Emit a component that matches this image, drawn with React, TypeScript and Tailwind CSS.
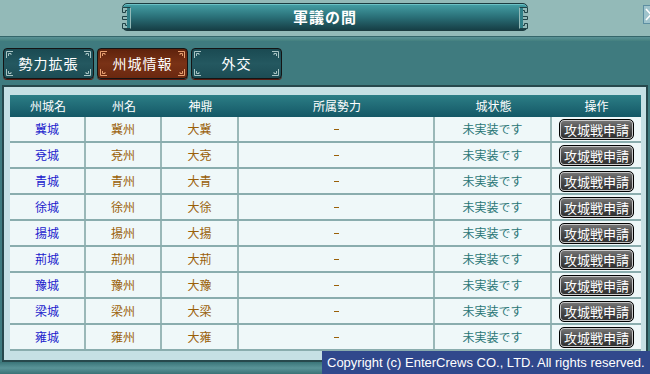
import React from "react";

const JP = '"Noto Sans CJK JP", "Noto Sans", sans-serif';

const rows: [string, string, string][] = [
  ["冀城", "冀州", "大冀"],
  ["兗城", "兗州", "大兗"],
  ["青城", "青州", "大青"],
  ["徐城", "徐州", "大徐"],
  ["揚城", "揚州", "大揚"],
  ["荊城", "荊州", "大荊"],
  ["豫城", "豫州", "大豫"],
  ["梁城", "梁州", "大梁"],
  ["雍城", "雍州", "大雍"],
];

function Corner({ color, className }: { color: string; className: string }) {
  return (
    <svg width="7" height="7" viewBox="0 0 7 7" className={`absolute ${className}`}>
      <path d="M0.5 7 V0.5 H7 M2.5 5 V2.5 H5 V4" fill="none" stroke={color} strokeWidth="1" />
    </svg>
  );
}

function Tab({ label, active }: { label: string; active?: boolean }) {
  const c = active ? "#e8a070" : "#a8c4c4";
  return (
    <div
      className={`relative w-[91px] h-[31px] rounded-[4px] border border-[#141414] flex items-center justify-center text-white text-[14px] shadow-[0_1px_0_#5a1c12] ${
        active
          ? "bg-gradient-to-b from-[#5e220c] via-[#7a3216] to-[#6a2810]"
          : "bg-gradient-to-b from-[#1a4a52] via-[#245860] to-[#1c4c54]"
      }`}
    >
      <Corner color={c} className="left-[2px] top-[2px]" />
      <Corner color={c} className="right-[2px] top-[2px] -scale-x-100" />
      <Corner color={c} className="left-[2px] bottom-[2px] -scale-y-100" />
      <Corner color={c} className="right-[2px] bottom-[2px] -scale-100" />
      <span className="tracking-[1px]">{label}</span>
    </div>
  );
}

function KeyOrnament({ flip }: { flip?: boolean }) {
  return (
    <svg
      width="10"
      height="22"
      viewBox="0 0 10 22"
      className={`absolute top-[3px] ${flip ? "right-[-2px] -scale-x-100" : "left-[-2px]"}`}
    >
      <rect x="0" y="0" width="10" height="22" fill="#93bab8" />
      <path
        d="M9.5 0.5 H1.5 V5.5 H4.5 V3.5 H6.5 V9.5 H1.5 V12.5 H6.5 V18.5 H4.5 V16.5 H1.5 V21.5 H9.5"
        fill="none"
        stroke="#1f4347"
        strokeWidth="1"
      />
      <path d="M7.5 1 V21" stroke="#2f8088" strokeWidth="3" />
    </svg>
  );
}

export default function App() {
  return (
    <div
      className="relative w-[650px] h-[374px] overflow-hidden bg-[#3f7b7f] flex flex-col"
      style={{ fontFamily: JP }}
    >
      {/* top bar */}
      <div className="relative h-[36px] bg-[#93bab8] flex justify-center pt-[3px] shrink-0">
        <div className="relative w-[406px] h-[28px] rounded-[5px] border border-[#1c3c40] bg-gradient-to-b from-[#45a0a6] via-[#2a7078] to-[#163f46] flex items-center justify-center shadow-[inset_0_1px_0_#6cc0c4]">
          <KeyOrnament />
          <KeyOrnament flip />
          <span className="text-white font-bold text-[15px] tracking-[1px]">軍議の間</span>
        </div>
        <div className="absolute left-[643px] top-[5px] w-[16px] h-[19px] border border-[#5d8fa2] bg-[#9fc4cc]">
          <svg width="14" height="17" viewBox="0 0 14 17" className="block">
            <path d="M2 3 L12 14 M12 3 L2 14" stroke="#ffffff" strokeWidth="1.6" />
          </svg>
        </div>
      </div>
      <div className="h-[1px] bg-[#34666a] shrink-0" />
      <div className="h-[4px] bg-gradient-to-b from-[#5a9296] to-[#44807f] shrink-0" />

      {/* tabs */}
      <div className="flex gap-[3px] pl-[3px] pt-[7px] shrink-0">
        <Tab label="勢力拡張" />
        <Tab label="州城情報" active />
        <Tab label="外交" />
      </div>

      {/* panel */}
      <div className="mt-[6px] ml-[2px] w-[646px] h-[277px] border-2 border-[#27484c] bg-[#c6e0e4] pt-[8px] pl-[6px] shrink-0">
        <div className="w-[631px] text-[12px]">
          <div className="grid grid-cols-[76px_76px_77px_196px_117px_89px] h-[22px] bg-gradient-to-b from-[#2c7e86] to-[#145866] text-white">
            {["州城名", "州名", "神鼎", "所属勢力", "城状態", "操作"].map((h) => (
              <div key={h} className="flex items-center justify-center">
                {h}
              </div>
            ))}
          </div>
          {rows.map(([castle, prov, tripod]) => (
            <div
              key={castle}
              className="grid grid-cols-[76px_76px_77px_196px_117px_89px] h-[26px] bg-[#eff8f9] border-b-2 border-[#8aadae]"
            >
              <div className="flex items-center justify-center text-[#2020cc] border-r-2 border-[#9ab8b8]">
                {castle}
              </div>
              <div className="flex items-center justify-center text-[#9a6008] border-r-2 border-[#9ab8b8]">
                {prov}
              </div>
              <div className="flex items-center justify-center text-[#9a6008] border-r-2 border-[#9ab8b8]">
                {tripod}
              </div>
              <div className="flex items-center justify-center text-[#9a6008] border-r-2 border-[#9ab8b8]">
                <span className="block w-[5px] h-[1px] bg-[#9a6008]" />
              </div>
              <div className="flex items-center justify-center text-[#2a7676] border-r-2 border-[#9ab8b8]">
                未実装です
              </div>
              <div className="flex items-center justify-center">
                <div className="w-[75px] h-[21px] rounded-[5px] border border-black bg-gradient-to-b from-[#7a7a7a] via-[#4a4a4a] to-[#2e2e2e] shadow-[inset_0_0_0_1px_#c8c8c8] flex items-center justify-center text-white text-[13px] leading-none">
                  攻城戦申請
                </div>
              </div>
            </div>
          ))}
        </div>
      </div>

      {/* bottom strip */}
      <div className="flex-1 bg-gradient-to-b from-[#3a7478] via-[#5a9498] to-[#3a7276]" />

      {/* copyright overlay */}
      <div
        className="absolute left-[322px] top-[351px] w-[328px] h-[23px] bg-[#30488c] text-white text-[13px] flex items-center pl-[5px] whitespace-nowrap"
        style={{ fontFamily: '"Liberation Sans", Arial, sans-serif' }}
      >
        Copyright (c) EnterCrews CO., LTD. All rights reserved.
      </div>
    </div>
  );
}
